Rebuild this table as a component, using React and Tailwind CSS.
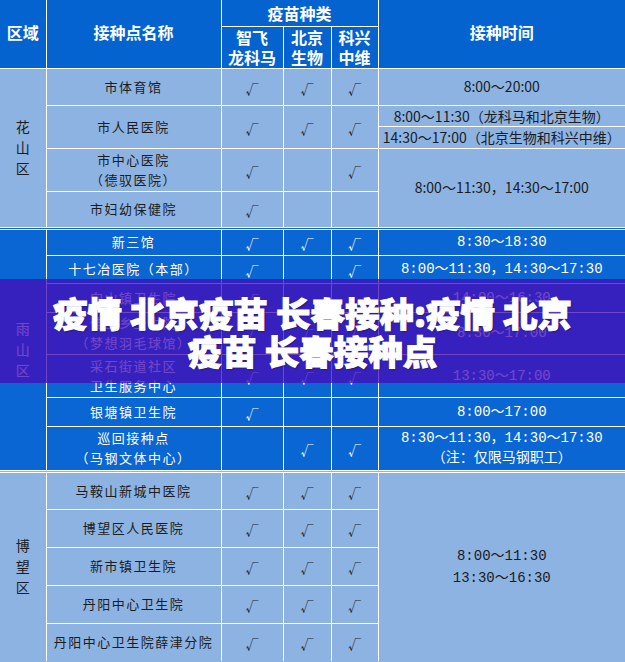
import React from 'react';

const cjk = "font-['Noto_Sans_CJK_SC',sans-serif]";
const mono = "font-['Liberation_Mono','Noto_Sans_CJK_SC',monospace]";

function Check({ on }) {
  return on ? <span className="text-[13px]">√</span> : null;
}

function RegionCell({ name, rows }) {
  return (
    <td rowSpan={rows} className="border border-white text-center align-middle">
      <div className="flex flex-col items-center text-[14px] leading-[21px]">
        {name.split('').map((c, i) => (
          <span key={i}>{c}</span>
        ))}
      </div>
    </td>
  );
}

function NameCell({ lines, rowSpan = 1 }) {
  return (
    <td rowSpan={rowSpan} className="border border-white text-center align-middle text-[13px] leading-[20px] tracking-[1.5px]">
      {lines.map((l, i) => (
        <div key={i}>{l}</div>
      ))}
    </td>
  );
}

function Checks({ marks, rowSpan = 1 }) {
  return marks.map((m, i) => (
    <td key={i} rowSpan={rowSpan} className="border border-white text-center align-middle">
      <Check on={m} />
    </td>
  ));
}

const yushan = [
  { h: 'h-[27px]', name: ['新三馆'], marks: [1, 1, 1], time: ['8:30～18:30'] },
  { h: 'h-[28px]', name: ['十七冶医院（本部）'], marks: [1, 0, 1], time: ['8:00～11:30，14:30～17:30'] },
  { h: 'h-[29px]', name: ['向山镇卫生院'], marks: [1, 0, 0], time: ['14:00～16:30'] },
  { h: 'h-[42px]', name: ['佳山乡卫生院', '（梦想羽毛球馆）'], marks: [1, 1, 1], time: ['8:30～17:00'] },
  { h: 'h-[43px]', name: ['采石街道社区', '卫生服务中心'], marks: [1, 1, 1], time: ['13:30～17:00'] },
  { h: 'h-[29px]', name: ['银塘镇卫生院'], marks: [1, 0, 0], time: ['8:00～17:00'] },
  { h: 'h-[45px]', name: ['巡回接种点', '（马钢文体中心）'], marks: [0, 1, 1], time: ['8:30～11:30，14:30～17:30', '（注：仅限马钢职工）'] },
];

const bowang = ['马鞍山新城中医院', '博望区人民医院', '新市镇卫生院', '丹阳中心卫生院', '丹阳中心卫生院薛津分院'];

export default function App() {
  return (
    <div className={`relative w-[625px] h-[662px] overflow-hidden bg-[#8db3e2] ${cjk}`}>
      <table className="w-[625px] table-fixed border-collapse border-hidden">
        <colgroup>
          <col className="w-[46px]" />
          <col className="w-[175px]" />
          <col className="w-[62px]" />
          <col className="w-[48px]" />
          <col className="w-[47px]" />
          <col className="w-[247px]" />
        </colgroup>
        <thead className="bg-[#0563d0] text-white font-bold text-[16px]">
          <tr className="h-[26px]">
            <td rowSpan={2} className="border border-white text-center pb-[4px]">区域</td>
            <td rowSpan={2} className="border border-white text-center pb-[4px]">接种点名称</td>
            <td colSpan={3} className="border border-white text-center leading-[20px]">疫苗种类</td>
            <td rowSpan={2} className="border border-white text-center pb-[4px]">接种时间</td>
          </tr>
          <tr className="h-[42px] leading-[20px]">
            <td className="border border-white text-center">智飞<br />龙科马</td>
            <td className="border border-white text-center">北京<br />生物</td>
            <td className="border border-white text-center">科兴<br />中维</td>
          </tr>
        </thead>
        <tbody className="bg-[#8db3e2] text-[#1c1c1c]">
          <tr className="h-[37px]">
            <RegionCell name="花山区" rows={5} />
            <NameCell lines={['市体育馆']} />
            <Checks marks={[1, 1, 1]} />
            <td className="border border-white text-center text-[14px]">8:00～20:00</td>
          </tr>
          <tr className="h-[21px]">
            <NameCell lines={['市人民医院']} rowSpan={2} />
            <Checks marks={[1, 1, 1]} rowSpan={2} />
            <td className="border border-white text-center text-[14px] leading-[18px] whitespace-nowrap">8:00～11:30（龙科马和北京生物）</td>
          </tr>
          <tr className="h-[22px]">
            <td className="border border-white text-center text-[14px] leading-[18px] whitespace-nowrap">14:30～17:00（北京生物和科兴中维）</td>
          </tr>
          <tr className="h-[43px]">
            <NameCell lines={['市中心医院', '（德驭医院）']} />
            <Checks marks={[1, 0, 1]} />
            <td rowSpan={2} className="border border-white text-center text-[14px]">8:00～11:30，14:30～17:00</td>
          </tr>
          <tr className="h-[37px]">
            <NameCell lines={['市妇幼保健院']} />
            <Checks marks={[1, 0, 0]} />
          </tr>
        </tbody>
        <tbody className="bg-[#0a66d2] text-white border-t-[3px] border-double border-white">
          {yushan.map((r, i) => (
            <tr key={i} className={r.h}>
              {i === 0 && <RegionCell name="雨山区" rows={yushan.length} />}
              <NameCell lines={r.name} />
              <Checks marks={r.marks} />
              <td className={`border border-white text-center text-[14px] leading-[20px] whitespace-nowrap ${mono}`}>
                {r.time.map((t, j) => (
                  <div key={j}>{t}</div>
                ))}
              </td>
            </tr>
          ))}
        </tbody>
        <tbody className="bg-[#8db3e2] text-[#1c1c1c] border-t-[3px] border-double border-white">
          {bowang.map((n, i) => (
            <tr key={i} className="h-[38px]">
              {i === 0 && <RegionCell name="博望区" rows={bowang.length} />}
              <NameCell lines={[n]} />
              <Checks marks={[1, 1, 1]} />
              {i === 0 && (
                <td rowSpan={bowang.length} className={`border border-white text-center text-[14px] leading-[22px] ${mono}`}>
                  <div>8:00～11:30</div>
                  <div>13:30～16:30</div>
                </td>
              )}
            </tr>
          ))}
        </tbody>
      </table>

      <div className="absolute left-0 right-0 top-[279px] h-[104px] bg-[rgba(70,12,184,0.76)] flex flex-col items-center justify-center">
        <div className="text-white font-black text-[34.5px] leading-[38px] whitespace-nowrap [-webkit-text-stroke:1px_white] [text-shadow:1px_1px_2px_rgba(0,0,0,0.45)]">
          疫情 北京疫苗 长春接种:疫情 北京
        </div>
        <div className="text-white font-black text-[34.5px] leading-[38px] whitespace-nowrap [-webkit-text-stroke:1px_white] [text-shadow:1px_1px_2px_rgba(0,0,0,0.45)]">
          疫苗 长春接种点
        </div>
      </div>
    </div>
  );
}
